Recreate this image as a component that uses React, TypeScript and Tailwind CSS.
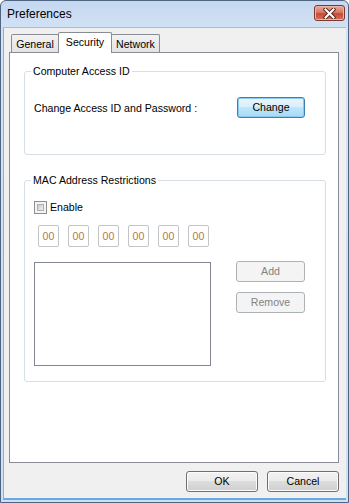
import React from "react";

const font = { fontFamily: '"Liberation Sans", Arial, sans-serif' };

function WinButton({
  children,
  w,
  variant = "normal",
}: {
  children: React.ReactNode;
  w: string;
  variant?: "normal" | "default" | "disabled";
}) {
  const cls =
    variant === "default"
      ? "border-[#3c7fb1] bg-[linear-gradient(#eaf6fd_0%,#d9f0fc_45%,#bee6fd_50%,#a7d9f5_100%)] text-black shadow-[inset_0_0_0_1px_#8ccbee]"
      : variant === "disabled"
      ? "border-[#adb2b5] bg-[#f4f4f4] text-[#838383]"
      : "border-[#707070] bg-[linear-gradient(#f2f2f2_0%,#ebebeb_45%,#dddddd_50%,#cfcfcf_100%)] text-black shadow-[inset_0_0_0_1px_#fcfcfc]";
  return (
    <div
      className={`${w} h-[21px] flex items-center justify-center rounded-[3px] border text-[10.6px] leading-none ${cls}`}
    >
      {children}
    </div>
  );
}

function GroupBox({
  label,
  className,
  children,
}: {
  label: string;
  className: string;
  children: React.ReactNode;
}) {
  return (
    <div className={`relative border border-[#d5dfe5] rounded-[3px] ${className}`}>
      <div className="absolute left-[6px] top-[-7px] bg-white px-[2px] text-[10.6px] leading-[13px] text-black">
        {label}
      </div>
      {children}
    </div>
  );
}

export default function App() {
  return (
    <div
      style={font}
      className="w-[349px] h-[503px] flex flex-col border border-[#4f6480] rounded-t-[6px] bg-[linear-gradient(#c5d8f1_0px,#d3e2f5_28px,#cfe0f4_100%)] overflow-hidden"
    >
      {/* Title bar */}
      <div className="h-[26px] flex items-start justify-between pl-[6px] pr-[3px]">
        <div className="pt-[6px] text-[12px] leading-[14px] text-black">Preferences</div>
        <div className="mt-[4px] w-[31px] h-[16px] rounded-[3px] border border-[#7a3a2f] bg-[linear-gradient(#e9a99b_0%,#d77a66_45%,#c44a32_55%,#d5735e_100%)] flex items-center justify-center shadow-[inset_0_0_0_1px_#f0b4a6]">
          <svg width="13" height="11" viewBox="0 0 13 11">
            <path d="M2.5 1.5 L10.5 9.5 M10.5 1.5 L2.5 9.5" stroke="#5a2a22" strokeWidth="4" strokeLinecap="square" />
            <path d="M2.5 1.5 L10.5 9.5 M10.5 1.5 L2.5 9.5" stroke="#ffffff" strokeWidth="2" strokeLinecap="square" />
          </svg>
        </div>
      </div>

      {/* Client area */}
      <div className="flex-1 mx-[2px] mb-[2px] border-t border-[#a9bcd6] border-l border-l-[#7db3e6] bg-[#f0f0f0] flex flex-col pt-[4px] pl-[5px] pr-[7px] border-b-2 border-b-[#6aa8e0]">
        {/* Tabs */}
        <div className="h-[20px] flex items-end pl-[2px] relative z-10">
          <div className="w-[48px] h-[18px] border border-b-0 border-[#898c95] rounded-t-[2px] bg-[linear-gradient(#f2f2f2,#e3e3e3)] flex items-center justify-center text-[10.6px] leading-none text-black pt-[2px]">
            General
          </div>
          <div className="relative z-20 -ml-px w-[54px] h-[21px] -mb-px border border-b-0 border-[#898c95] rounded-t-[2px] bg-white flex items-center justify-center text-[10.6px] leading-none text-black pb-[2px]">
            Security
          </div>
          <div className="-ml-px w-[49px] h-[18px] border border-b-0 border-[#898c95] rounded-t-[2px] bg-[linear-gradient(#f2f2f2,#e3e3e3)] flex items-center justify-center text-[10.6px] leading-none text-black pt-[2px]">
            Network
          </div>
        </div>

        {/* Panel */}
        <div className="h-[411px] border border-[#898c95] bg-white flex flex-col pl-[14px] pr-[12px] pt-[18px]">
          <GroupBox label="Computer Access ID" className="h-[84px]">
            <div className="flex items-center justify-between pl-[9px] pr-[20px] pt-[25px]">
              <div className="text-[10.6px] leading-[13px] text-black pt-[2px]">
                Change Access ID and Password :
              </div>
              <WinButton w="w-[68px]" variant="default">
                Change
              </WinButton>
            </div>
          </GroupBox>

          <GroupBox label="MAC Address Restrictions" className="mt-[25px] h-[202px]">
            <div className="flex flex-col pl-[9px] pt-[20px]">
              <div className="flex items-center gap-[3px] h-[13px]">
                <div className="w-[13px] h-[13px] border border-[#8e8f8f] bg-[#f4f4f4] p-[2px]">
                  <div className="w-full h-full border border-[#aeaeae] bg-[linear-gradient(135deg,#cbcbcb,#f2f2f2)]" />
                </div>
                <div className="text-[10.6px] leading-[13px] text-black">Enable</div>
              </div>

              <div className="flex gap-[9px] pl-[4px] mt-[11px]">
                {[0, 1, 2, 3, 4, 5].map((i) => (
                  <div
                    key={i}
                    className="w-[21px] h-[22px] border border-[#c2c4c8] rounded-[2px] bg-white flex items-center justify-center text-[10.6px] leading-none text-[#b57a45]"
                  >
                    00
                  </div>
                ))}
              </div>

              <div className="flex mt-[15px]">
                <div className="w-[177px] h-[104px] border border-[#828790] bg-white" />
                <div className="flex flex-col gap-[10px] ml-[25px] -mt-px">
                  <WinButton w="w-[69px]" variant="disabled">
                    Add
                  </WinButton>
                  <WinButton w="w-[69px]" variant="disabled">
                    Remove
                  </WinButton>
                </div>
              </div>
            </div>
          </GroupBox>
        </div>

        {/* Bottom buttons */}
        <div className="flex justify-end gap-[9px] mt-[8px]">
          <WinButton w="w-[72px]">OK</WinButton>
          <WinButton w="w-[72px]">Cancel</WinButton>
        </div>
      </div>
    </div>
  );
}
